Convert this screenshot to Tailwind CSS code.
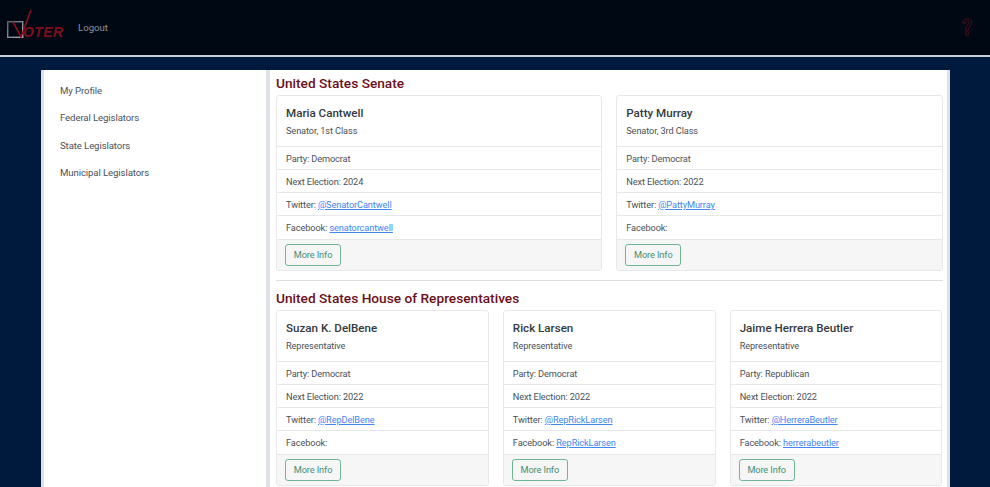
<!DOCTYPE html>
<html lang="en">
<head>
    <meta charset="UTF-8">
    <script src="https://cdn.jsdelivr.net/npm/@tailwindcss/browser@4"></script>
    <title>Voter</title>
</head>
<body class="h-[487px] overflow-hidden bg-[#001a3d] font-['Roboto',sans-serif] text-[9.2px] tracking-[-0.1px] text-[#4a5158]">
    <!-- Header -->
    <header class="h-[57px] flex items-start justify-between bg-[#000814] border-b-2 border-[#c9ced4]">
        <div class="flex items-start">
            <svg class="ml-[6px] mt-[8px] w-[60px] h-[34px]" viewBox="0 0 60 34">
                <defs>
                    <linearGradient id="boxStroke" x1="0" y1="0" x2="1" y2="1">
                        <stop offset="0" stop-color="#5d636b"/>
                        <stop offset="1" stop-color="#aab0b6"/>
                    </linearGradient>
                </defs>
                <rect x="1.7" y="13.7" width="15" height="15.6" fill="none" stroke="url(#boxStroke)" stroke-width="1.4"/>
                <path d="M7 14 L15 29 L25 2" fill="none" stroke="#8a1020" stroke-width="1.6"/>
                <text x="17" y="29" font-family="Liberation Sans" font-size="14" font-weight="700" font-style="italic" fill="#7c0f1c" textLength="40">OTER</text>
            </svg>
            <a class="ml-[12px] mt-[21px] text-[9.6px] tracking-normal text-[#8d939b] leading-[14px]">Logout</a>
        </div>
        <svg class="mr-[17px] mt-[17px] w-[12px] h-[20px]" viewBox="0 0 14 21">
            <path d="M2 6 C2 -0.5 12.5 -0.5 12.5 5.5 C12.5 9.5 8.6 9.5 8.6 14 H5.4 C5.4 8 9.4 8.5 9.4 5.5 C9.4 3 5.2 3 5.2 6 Z M5.4 16 H8.6 V20 H5.4 Z" fill="none" stroke="#5a0d1c" stroke-width="1"/>
        </svg>
    </header>

    <!-- Main -->
    <div class="mx-[41px] mt-[13px] w-[909px] h-[420px] flex bg-white border-x-[3px] border-[#dee2e6]">
        <aside class="w-[226px] shrink-0 pl-[16px] pt-[14px] border-r-[4px] border-[#dee2e6]">
            <a class="block h-[27.3px] leading-[14px] text-[9.6px]">My Profile</a>
            <a class="block h-[27.3px] leading-[14px] text-[9.6px]">Federal Legislators</a>
            <a class="block h-[27.3px] leading-[14px] text-[9.6px]">State Legislators</a>
            <a class="block h-[27.3px] leading-[14px] text-[9.6px]">Municipal Legislators</a>
        </aside>
        <main class="flex-1 min-w-0 pl-[6px] pr-[4.5px]">
            <h2 class="mt-[5px] text-[13.7px] tracking-normal leading-[17px] font-medium text-[#6b0f1a]">United States Senate</h2>
            <div class="mt-[3px] flex gap-[14px]">
                <div class="flex-1 flex flex-col h-[176px] border border-[#e6e8ea] rounded-[3px]">
                    <div class="h-[51px] pl-[9px] pt-[9px] border-b border-[#e6e8ea]">
                        <h3 class="text-[11.6px] tracking-normal leading-[16px] font-medium text-[#343a40]">Maria Cantwell</h3>
                        <p class="mt-[3px] leading-[14px]">Senator, 1st Class</p>
                    </div>
                    <div class="h-[23px] pl-[9px] leading-[23px] border-b border-[#e6e8ea]">Party: Democrat</div>
                    <div class="h-[23px] pl-[9px] leading-[23px] border-b border-[#e6e8ea]">Next Election: 2024</div>
                    <div class="h-[23px] pl-[9px] leading-[23px] border-b border-[#e6e8ea]">Twitter: <a class="text-[#4285f4] underline">@SenatorCantwell</a></div>
                    <div class="h-[24px] pl-[9px] leading-[24px] border-b border-[#e6e8ea]">Facebook: <a class="text-[#4285f4] underline">senatorcantwell</a></div>
                    <div class="flex-1 pl-[8px] pt-[4px] bg-[#f6f6f6]">
                        <button class="h-[22px] w-[56px] border border-[#6fb596] rounded-[3px] text-[#3f8f73] leading-[20px]">More Info</button>
                    </div>
                </div>
                <div class="flex-1 flex flex-col h-[176px] border border-[#e6e8ea] rounded-[3px]">
                    <div class="h-[51px] pl-[9px] pt-[9px] border-b border-[#e6e8ea]">
                        <h3 class="text-[11.6px] tracking-normal leading-[16px] font-medium text-[#343a40]">Patty Murray</h3>
                        <p class="mt-[3px] leading-[14px]">Senator, 3rd Class</p>
                    </div>
                    <div class="h-[23px] pl-[9px] leading-[23px] border-b border-[#e6e8ea]">Party: Democrat</div>
                    <div class="h-[23px] pl-[9px] leading-[23px] border-b border-[#e6e8ea]">Next Election: 2022</div>
                    <div class="h-[23px] pl-[9px] leading-[23px] border-b border-[#e6e8ea]">Twitter: <a class="text-[#4285f4] underline">@PattyMurray</a></div>
                    <div class="h-[24px] pl-[9px] leading-[24px] border-b border-[#e6e8ea]">Facebook:</div>
                    <div class="flex-1 pl-[8px] pt-[4px] bg-[#f6f6f6]">
                        <button class="h-[22px] w-[56px] border border-[#6fb596] rounded-[3px] text-[#3f8f73] leading-[20px]">More Info</button>
                    </div>
                </div>
            </div>
            <hr class="mt-[9px] border-[#dcdfe2]">

            <h2 class="mt-[9px] text-[13.7px] tracking-normal leading-[17px] font-medium text-[#6b0f1a]">United States House of Representatives</h2>
            <div class="mt-[3px] flex gap-[14px]">
                <div class="flex-1 flex flex-col h-[176px] border border-[#e6e8ea] rounded-[3px]">
                    <div class="h-[51px] pl-[9px] pt-[9px] border-b border-[#e6e8ea]">
                        <h3 class="text-[11.6px] tracking-normal leading-[16px] font-medium text-[#343a40]">Suzan K. DelBene</h3>
                        <p class="mt-[3px] leading-[14px]">Representative</p>
                    </div>
                    <div class="h-[23px] pl-[9px] leading-[23px] border-b border-[#e6e8ea]">Party: Democrat</div>
                    <div class="h-[23px] pl-[9px] leading-[23px] border-b border-[#e6e8ea]">Next Election: 2022</div>
                    <div class="h-[23px] pl-[9px] leading-[23px] border-b border-[#e6e8ea]">Twitter: <a class="text-[#4285f4] underline">@RepDelBene</a></div>
                    <div class="h-[24px] pl-[9px] leading-[24px] border-b border-[#e6e8ea]">Facebook:</div>
                    <div class="flex-1 pl-[8px] pt-[4px] bg-[#f6f6f6]">
                        <button class="h-[22px] w-[56px] border border-[#6fb596] rounded-[3px] text-[#3f8f73] leading-[20px]">More Info</button>
                    </div>
                </div>
                <div class="flex-1 flex flex-col h-[176px] border border-[#e6e8ea] rounded-[3px]">
                    <div class="h-[51px] pl-[9px] pt-[9px] border-b border-[#e6e8ea]">
                        <h3 class="text-[11.6px] tracking-normal leading-[16px] font-medium text-[#343a40]">Rick Larsen</h3>
                        <p class="mt-[3px] leading-[14px]">Representative</p>
                    </div>
                    <div class="h-[23px] pl-[9px] leading-[23px] border-b border-[#e6e8ea]">Party: Democrat</div>
                    <div class="h-[23px] pl-[9px] leading-[23px] border-b border-[#e6e8ea]">Next Election: 2022</div>
                    <div class="h-[23px] pl-[9px] leading-[23px] border-b border-[#e6e8ea]">Twitter: <a class="text-[#4285f4] underline">@RepRickLarsen</a></div>
                    <div class="h-[24px] pl-[9px] leading-[24px] border-b border-[#e6e8ea]">Facebook: <a class="text-[#4285f4] underline">RepRickLarsen</a></div>
                    <div class="flex-1 pl-[8px] pt-[4px] bg-[#f6f6f6]">
                        <button class="h-[22px] w-[56px] border border-[#6fb596] rounded-[3px] text-[#3f8f73] leading-[20px]">More Info</button>
                    </div>
                </div>
                <div class="flex-1 flex flex-col h-[176px] border border-[#e6e8ea] rounded-[3px]">
                    <div class="h-[51px] pl-[9px] pt-[9px] border-b border-[#e6e8ea]">
                        <h3 class="text-[11.6px] tracking-normal leading-[16px] font-medium text-[#343a40]">Jaime Herrera Beutler</h3>
                        <p class="mt-[3px] leading-[14px]">Representative</p>
                    </div>
                    <div class="h-[23px] pl-[9px] leading-[23px] border-b border-[#e6e8ea]">Party: Republican</div>
                    <div class="h-[23px] pl-[9px] leading-[23px] border-b border-[#e6e8ea]">Next Election: 2022</div>
                    <div class="h-[23px] pl-[9px] leading-[23px] border-b border-[#e6e8ea]">Twitter: <a class="text-[#4285f4] underline">@HerreraBeutler</a></div>
                    <div class="h-[24px] pl-[9px] leading-[24px] border-b border-[#e6e8ea]">Facebook: <a class="text-[#4285f4] underline">herrerabeutler</a></div>
                    <div class="flex-1 pl-[8px] pt-[4px] bg-[#f6f6f6]">
                        <button class="h-[22px] w-[56px] border border-[#6fb596] rounded-[3px] text-[#3f8f73] leading-[20px]">More Info</button>
                    </div>
                </div>
            </div>
        </main>
    </div>
</body>
</html>
